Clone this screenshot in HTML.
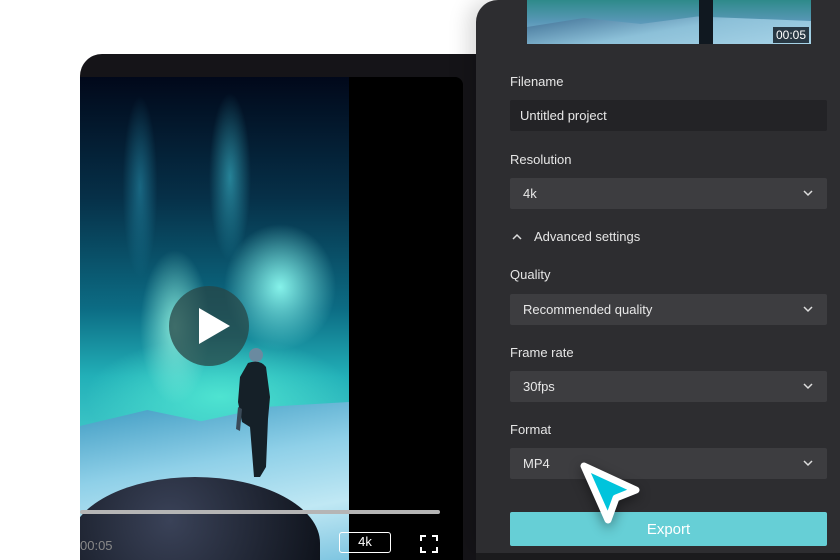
<!DOCTYPE html>
<html style="width:840px;height:560px;overflow:hidden"><head><meta charset="utf-8"><style>
*{margin:0;padding:0;box-sizing:border-box}
body{width:840px;height:560px;background:#fff;position:relative;overflow:hidden;font-family:"Liberation Sans",sans-serif}
.win{position:absolute;left:80px;top:54px;width:420px;height:506px;background:#151418;border-top-left-radius:22px}
.vid{position:absolute;left:80px;top:77px;width:383px;height:483px;background:#000;border-top-right-radius:8px;overflow:hidden}
.img{position:absolute;left:0;top:0;width:269px;height:483px;overflow:hidden;
background:
radial-gradient(ellipse 30px 120px at 150px 100px,rgba(60,190,210,.6),transparent 70%),
radial-gradient(ellipse 25px 130px at 60px 110px,rgba(40,150,180,.55),transparent 70%),
radial-gradient(ellipse 80px 90px at 200px 210px,rgba(140,250,240,.95),transparent 70%),
radial-gradient(ellipse 50px 110px at 95px 250px,rgba(150,245,225,.85),transparent 70%),
radial-gradient(ellipse 180px 80px at 140px 320px,rgba(80,230,210,.95),transparent 75%),
linear-gradient(#01081a 0%,#063048 25%,#0c6c84 48%,#22b0b8 62%,#40c8c8 75%,#4fc0d0 100%)}
.snow{position:absolute;left:0;top:325px;width:269px;height:160px;background:linear-gradient(170deg,#3a98c0,#8fd0e8 40%,#c0e8f4 70%,#7cc4e0);clip-path:polygon(0 15%,25% 5%,45% 12%,70% 3%,100% 0,100% 100%,0 100%)}
.rock{position:absolute;left:-10px;top:400px;width:250px;height:110px;background:radial-gradient(circle at 40% 40%,#3a4258,#0c1018);border-radius:50% 50% 10% 10%/60% 60% 10% 10%}
.play{position:absolute;left:89px;top:209px;width:80px;height:80px;border-radius:50%;background:rgba(40,70,70,.75)}
.play:after{content:"";position:absolute;left:30px;top:22px;border-left:31px solid #fff;border-top:18px solid transparent;border-bottom:18px solid transparent}
.panel{position:absolute;left:476px;top:0;width:380px;height:553px;background:#2d2d30;border-top-left-radius:22px;box-shadow:-8px 0 20px rgba(0,0,0,.15)}
.pbot{position:absolute;left:476px;top:553px;width:380px;height:7px;background:#1b1b1d}
.thumb{position:absolute;left:527px;top:0;width:284px;height:44px;background:linear-gradient(180deg,#2e8a8a,#5a98b8 50%,#8fc0d8);overflow:hidden}
.tc{position:absolute;right:2px;bottom:1px;background:rgba(20,30,40,.85);color:#fff;font-size:12px;padding:1px 3px}
.lbl{position:absolute;left:510px;color:#e6e6e6;font-size:13px}
.inp{position:absolute;left:510px;width:317px;height:31px;background:#3d3d40;border-radius:2px;color:#e8e8e8;font-size:13px;padding:8px 13px}
.inp svg{position:absolute;right:14px;top:12px}
.exp{position:absolute;left:510px;top:512px;width:317px;height:34px;background:#66cfd6;border-radius:2px;color:#fff;font-size:15px;text-align:center;line-height:36px}
</style></head><body>
<div class="win"></div>
<div class="vid">
 <div class="img">
  <div class="snow"></div>
  <div class="rock"></div>
  <svg style="position:absolute;left:150px;top:270px" width="50" height="140" viewBox="0 0 50 140">
   <circle cx="26" cy="8" r="7" fill="#6a8aa0"/>
   <path d="M18 16 Q30 12 36 20 L40 50 L38 72 L36 120 L30 130 L24 130 L20 80 L12 75 L8 55 L10 30 Z" fill="#152028"/>
   <path d="M8 60 L6 82 L10 84 L12 62Z" fill="#3a4a58"/>
  </svg>
  <div class="play"></div>
 </div>
 <div style="position:absolute;left:0;top:433px;width:360px;height:4px;background:#b5b5b5;border-radius:2px"></div>
 <div style="position:absolute;left:0;top:461px;color:#888;font-size:13px">00:05</div>
 <div style="position:absolute;left:259px;top:455px;width:52px;height:21px;border:1.5px solid #fff;border-radius:3px;color:#fff;font-size:13px;text-align:center;line-height:18px">4k</div>
 <svg style="position:absolute;left:340px;top:458px" width="18" height="18" viewBox="0 0 18 18" fill="none" stroke="#fff" stroke-width="2"><path d="M1 6V1h5M12 1h5v5M17 12v5h-5M6 17H1v-5"/></svg>
</div>
<div class="panel"></div>
<div class="pbot"></div>
<div class="thumb">
 <div style="position:absolute;left:0;top:15px;width:284px;height:30px;background:linear-gradient(170deg,#3a6a90,#8cc0d8 50%,#a8d4e8);clip-path:polygon(0 40%,20% 10%,40% 30%,60% 5%,100% 20%,100% 100%,0 100%)"></div>
 <div style="position:absolute;left:172px;top:0;width:14px;height:44px;background:#101820"></div>
 <div class="tc">00:05</div>
</div>
<div class="lbl" style="top:74px">Filename</div>
<div class="inp" style="top:100px;background:#232326;padding-left:10px">Untitled project</div>
<div class="lbl" style="top:152px">Resolution</div>
<div class="inp" style="top:178px">4k<svg width="10" height="7" viewBox="0 0 10 7"><path d="M1 1l4 4 4-4" stroke="#ddd" stroke-width="1.5" fill="none"/></svg></div>
<svg style="position:absolute;left:512px;top:233px" width="10" height="7" viewBox="0 0 10 7"><path d="M1 6l4-4 4 4" stroke="#ddd" stroke-width="1.5" fill="none"/></svg>
<div class="lbl" style="top:229px;left:534px">Advanced settings</div>
<div class="lbl" style="top:267px">Quality</div>
<div class="inp" style="top:294px">Recommended quality<svg width="10" height="7" viewBox="0 0 10 7"><path d="M1 1l4 4 4-4" stroke="#ddd" stroke-width="1.5" fill="none"/></svg></div>
<div class="lbl" style="top:345px">Frame rate</div>
<div class="inp" style="top:371px">30fps<svg width="10" height="7" viewBox="0 0 10 7"><path d="M1 1l4 4 4-4" stroke="#ddd" stroke-width="1.5" fill="none"/></svg></div>
<div class="lbl" style="top:422px">Format</div>
<div class="inp" style="top:448px">MP4<svg width="10" height="7" viewBox="0 0 10 7"><path d="M1 1l4 4 4-4" stroke="#ddd" stroke-width="1.5" fill="none"/></svg></div>
<div class="exp">Export</div>
<svg style="position:absolute;left:574px;top:458px;filter:drop-shadow(0 4px 6px rgba(0,0,0,.4))" width="72" height="72" viewBox="0 0 72 72">
 <path d="M10 8 L62 32 L42 40 L34 62 Z" fill="#00c4dc" stroke="#fff" stroke-width="7" stroke-linejoin="round"/>
</svg>
</body></html>
